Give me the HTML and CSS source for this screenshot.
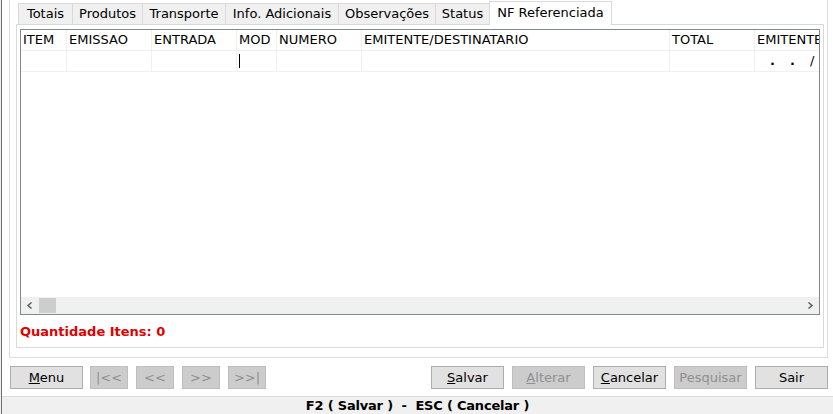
FILE: index.html
```html
<!DOCTYPE html>
<html lang="pt">
<head>
<meta charset="utf-8">
<title>NF Referenciada</title>
<link rel="stylesheet" href="styles.css">
</head>
<body>
<div class="window">
  <div class="frame">
    <div class="tabs">
      <div class="tab w-totais">Totais</div>
      <div class="tab w-produtos">Produtos</div>
      <div class="tab w-transporte">Transporte</div>
      <div class="tab w-info">Info. Adicionais</div>
      <div class="tab w-obs">Observações</div>
      <div class="tab w-status">Status</div>
      <div class="tab active w-nf">NF Referenciada</div>
    </div>
    <div class="panel">
      <div class="grid">
        <div class="grid-body">
          <div class="row head">
            <div class="cell">ITEM</div>
            <div class="cell">EMISSAO</div>
            <div class="cell">ENTRADA</div>
            <div class="cell">MOD</div>
            <div class="cell">NUMERO</div>
            <div class="cell">EMITENTE/DESTINATARIO</div>
            <div class="cell">TOTAL</div>
            <div class="cell">EMITENTE CNPJ</div>
          </div>
          <div class="row">
            <div class="cell"></div>
            <div class="cell"></div>
            <div class="cell"></div>
            <div class="cell"><span class="caret"></span></div>
            <div class="cell"></div>
            <div class="cell"></div>
            <div class="cell"></div>
            <div class="cell mask"><span class="m1">.</span><span class="m2">.</span><span class="m3">/</span></div>
          </div>
        </div>
        <div class="hscroll">
          <div class="arrow">
            <svg width="17" height="17" viewBox="0 0 17 17"><path d="M10.5 5.5 L7 8.5 L10.5 11.5" fill="none" stroke="#606060" stroke-width="1.6"/></svg>
          </div>
          <div class="thumb"></div>
          <div class="arrow right">
            <svg width="17" height="17" viewBox="0 0 17 17"><path d="M6.5 5.5 L10 8.5 L6.5 11.5" fill="none" stroke="#606060" stroke-width="1.6"/></svg>
          </div>
        </div>
      </div>
      <div class="qty">Quantidade Itens: 0</div>
    </div>
  </div>

  <div class="buttons">
    <div class="btn"><u>M</u>enu</div>
    <div class="nav-group">
      <div class="btn nav disabled">|&lt;&lt;</div>
      <div class="btn nav disabled">&lt;&lt;</div>
      <div class="btn nav disabled">&gt;&gt;</div>
      <div class="btn nav disabled">&gt;&gt;|</div>
    </div>
    <div class="action-group">
      <div class="btn"><u>S</u>alvar</div>
      <div class="btn disabled"><u>A</u>lterar</div>
      <div class="btn"><u>C</u>ancelar</div>
      <div class="btn disabled">Pesquisar</div>
      <div class="btn">Sair</div>
    </div>
  </div>

  <div class="status">F2 ( Salvar ) &nbsp;-&nbsp; ESC ( Cancelar )</div>
</div>
</body>
</html>
```

FILE: styles.css
```css
* { box-sizing: border-box; }

html, body { margin: 0; padding: 0; }

body {
  width: 833px;
  height: 414px;
  overflow: hidden;
  background: #f0f0f0;
  font-family: "DejaVu Sans", Verdana, sans-serif;
  font-size: 13px;
  color: #000;
}

.window {
  margin-left: 1px;
  border-left: 1px solid #6e6e6e;
  background: #fff;
  height: 414px;
  display: flex;
  flex-direction: column;
}

/* outer group frame */
.frame {
  margin-left: 7px;
  width: 819px;
  height: 358px;
  border: 1px solid #dcdcdc;
  border-top: none;
  padding: 0 3px 9px 6px;
  display: flex;
  flex-direction: column;
}

/* tabs */
.tabs {
  height: 24px;
  display: flex;
  align-items: flex-end;
  padding-left: 2px;
  position: relative;
  z-index: 1;
}

.tab {
  height: 21px;
  border: 1px solid #d9d9d9;
  border-bottom: none;
  border-right: none;
  background: #f0f0f0;
  text-align: center;
  line-height: 20px;
  white-space: nowrap;
}

.tab.active {
  height: 24px;
  margin-bottom: -1px;
  border-right: 1px solid #d9d9d9;
  background: #fff;
  line-height: 21px;
}

.w-totais { width: 54px; }
.w-produtos { width: 70px; }
.w-transporte { width: 83px; }
.w-info { width: 113px; }
.w-obs { width: 97px; }
.w-status { width: 54px; }
.w-nf { width: 123px; }

.panel {
  width: 808px;
  height: 324px;
  border: 1px solid #d9d9d9;
  background: #fff;
  padding: 4px 3px 0 3px;
}

/* grid */
.grid {
  height: 286px;
  border: 1px solid #828790;
  display: flex;
  flex-direction: column;
  overflow: hidden;
}

.grid-body {
  flex: 1;
  overflow: hidden;
}

.row {
  display: grid;
  grid-template-columns: 46px 85px 85px 40px 85px 308px 85px 110px;
  height: 21px;
  width: max-content;
}

.cell {
  border-right: 1px solid #f0f0f0;
  border-bottom: 1px solid #f0f0f0;
  padding-left: 2px;
  line-height: 20px;
  white-space: nowrap;
  overflow: hidden;
}

.caret {
  display: inline-block;
  width: 1px;
  height: 14px;
  background: #000;
  vertical-align: -3px;
}

.mask { padding-left: 15px; color: #000; font-weight: bold; }
.mask span { display: inline-block; }
.mask .m1, .mask .m2 { width: 20px; }
.mask .m3 { font-weight: normal; }

.hscroll {
  height: 17px;
  background: #f0f0f0;
  display: flex;
  align-items: center;
}

.arrow {
  width: 17px;
  height: 17px;
  display: flex;
}

.arrow.right { margin-left: auto; }

.thumb {
  width: 17px;
  height: 15px;
  margin-left: 1px;
  background: #cdcdcd;
}

.qty {
  margin-top: 9px;
  color: #e00000;
  font-weight: bold;
  line-height: 16px;
}

/* buttons */
.buttons {
  margin-top: 8px;
  display: flex;
  padding-left: 8px;
  padding-right: 5px;
}

.nav-group {
  display: flex;
  gap: 8px;
  margin-left: 7px;
}

.action-group {
  display: flex;
  gap: 8px;
  margin-left: auto;
}

.btn {
  width: 73px;
  height: 23px;
  border: 1px solid #adadad;
  background: #e1e1e1;
  text-align: center;
  line-height: 21px;
  white-space: nowrap;
}

.btn.nav { width: 38px; }

.btn.disabled {
  background: #cccccc;
  border-color: #bfbfbf;
  color: #8f8f8f;
}

.status {
  margin-top: auto;
  height: 18px;
  border-top: 1px solid #dadada;
  background: #f0f0f0;
  text-align: center;
  font-weight: bold;
  letter-spacing: -0.2px;
  line-height: 17px;
}
```
